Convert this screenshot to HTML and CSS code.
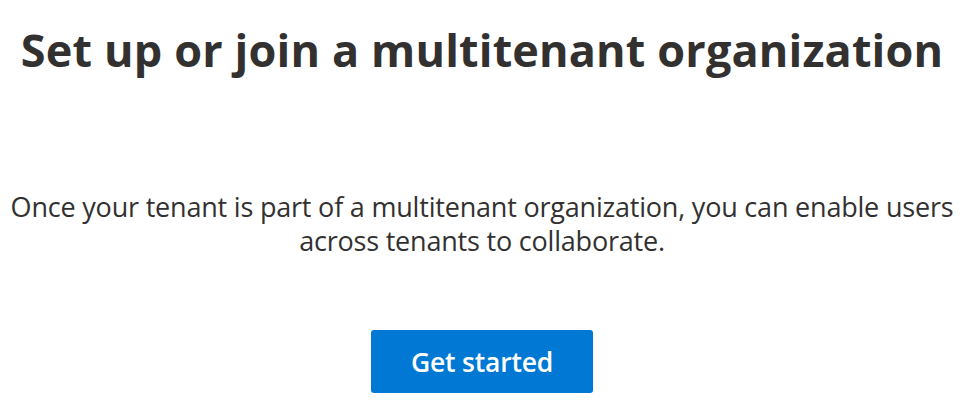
FILE: index.html
```html
<!DOCTYPE html>
<html lang="en">
<head>
<meta charset="utf-8">
<link rel="stylesheet" href="styles.css">
</head>
<body>
<main class="page">
  <h1 class="title">Set up or join a multitenant organization</h1>
  <p class="desc">Once your tenant is part of a multitenant organization, you can enable users across tenants to collaborate.</p>
  <button class="cta" type="button">Get started</button>
</main>
</body>
</html>
```
FILE: styles.css
```css
html, body {
  margin: 0;
  padding: 0;
  background: #ffffff;
}
.page {
  width: 964px;
  height: 408px;
  display: flex;
  flex-direction: column;
  align-items: center;
  font-family: "Open Sans", "Noto Sans", sans-serif;
  color: #323130;
}
.title {
  margin: 22px 0 0;
  font-size: 45px;
  line-height: 56px;
  font-weight: 700;
  letter-spacing: 0.15px;
  white-space: nowrap;
}
.desc {
  margin: 112px 0 0;
  width: 960px;
  text-align: center;
  font-size: 27px;
  line-height: 34px;
  letter-spacing: -0.2px;
}
.cta {
  margin-top: 72px;
  width: 222px;
  height: 63px;
  padding: 0;
  border: none;
  border-radius: 3px;
  background: #0078d4;
  color: #ffffff;
  font-family: "Open Sans", "Noto Sans", sans-serif;
  font-size: 26.5px;
  font-weight: 600;
  letter-spacing: -0.2px;
}
```
